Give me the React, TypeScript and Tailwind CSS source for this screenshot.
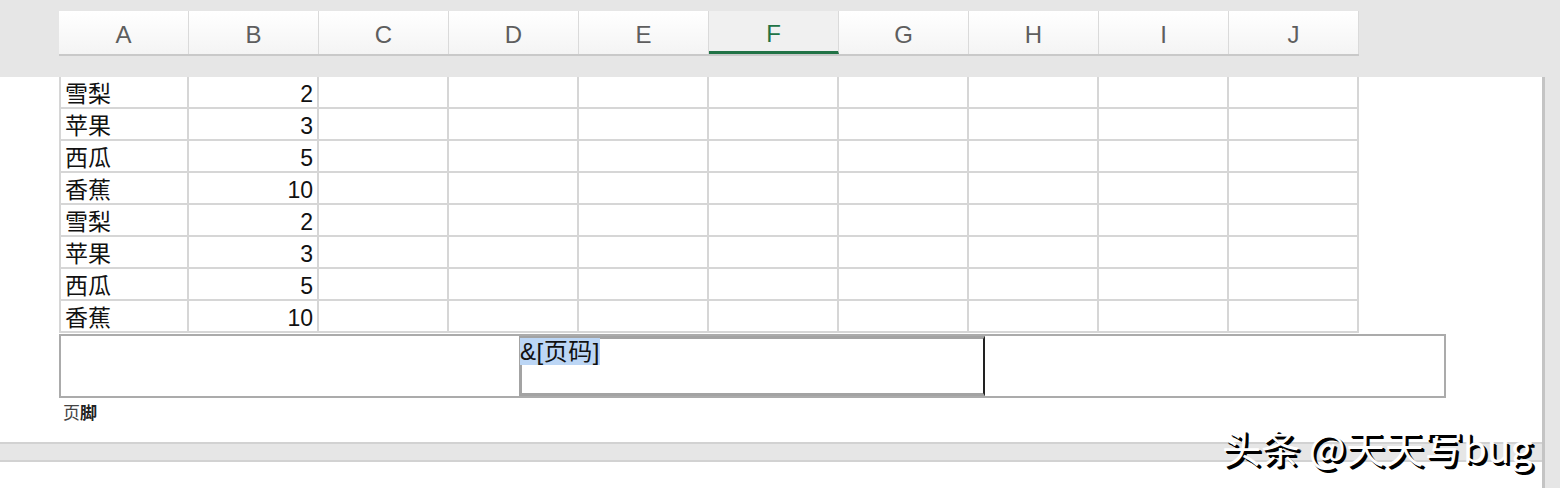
const COLS = ['A', 'B', 'C', 'D', 'E', 'F', 'G', 'H', 'I', 'J'];

const ROWS: [string, number][] = [
  ['雪梨', 2],
  ['苹果', 3],
  ['西瓜', 5],
  ['香蕉', 10],
  ['雪梨', 2],
  ['苹果', 3],
  ['西瓜', 5],
  ['香蕉', 10],
];

const FONT = "[font-family:'Liberation_Sans','Noto_Sans_CJK_SC',sans-serif]";

function HeaderRow() {
  return (
    <div className="ml-[59px] flex h-[45px] w-[1300px] border-b-2 border-[#c9c9c9] bg-gradient-to-b from-white to-[#f4f4f4]">
      {COLS.map((c) => {
        const active = c === 'F';
        return (
          <div
            key={c}
            className={`flex w-[130px] items-center justify-center border-r border-[#dadada] pt-[5px] text-[24px] ${
              active
                ? 'border-b-[3px] border-b-[#217346] bg-[#f0f0f0] text-[#217346]'
                : 'text-[#5e5e5e]'
            }`}
          >
            {c}
          </div>
        );
      })}
    </div>
  );
}

function DataGrid() {
  return (
    <div className="ml-[59px] w-[1300px] border-l-2 border-[#d6d6d6]">
      {ROWS.map(([name, qty], r) => (
        <div key={r} className="flex h-[32px] border-b-2 border-[#d6d6d6]">
          {COLS.map((c, i) => (
            <div
              key={c}
              className={`flex shrink-0 items-center border-r-2 border-[#d6d6d6] pt-[5px] text-[23px] leading-none text-[#111] ${
                i === 0 ? 'w-[128px] pl-[4px]' : 'w-[130px]'
              } ${i === 1 ? 'justify-end pr-[4px]' : ''}`}
            >
              {i === 0 ? name : i === 1 ? qty : null}
            </div>
          ))}
        </div>
      ))}
    </div>
  );
}

function FooterBox() {
  return (
    <div className="ml-[59px] mt-[1px] flex h-[64px] w-[1387px] border-2 border-[#ababab]">
      <div className="w-[458px]" />
      <div className="w-[466px] border-y-[3px] border-l-[3px] border-r-2 border-y-[#a3a3a3] border-l-[#a3a3a3] border-r-[#222]">
        <span className="-ml-[2px] bg-[#bcd6f5] text-[24px] leading-[25px] tracking-[0.5px] text-[#111]">&amp;[页码]</span>
      </div>
      <div className="flex-1" />
    </div>
  );
}

export default function App() {
  return (
    <div className={`relative h-[488px] w-[1560px] overflow-hidden bg-[#e6e6e6] ${FONT}`}>
      <div className="h-[77px] pt-[11px]">
        <HeaderRow />
      </div>
      <div className="flex">
        <div className="w-[1545px] border-r-[3px] border-[#c4c4c4]">
          <div className="h-[365px] bg-white">
            <DataGrid />
            <FooterBox />
            <div className="ml-[63px] mt-[3px] text-[17px] text-[#444]">
              页<span className="font-bold text-[#222]">脚</span>
            </div>
          </div>
          <div className="h-[20px] border-y-2 border-[#d2d2d2] bg-[#e6e6e6]" />
          <div className="h-[26px] bg-white" />
        </div>
        <div className="flex-1" />
      </div>
      <div className="absolute left-[1222px] top-[427px] whitespace-nowrap text-[39px] leading-none text-white [font-family:'Noto_Sans_CJK_SC',sans-serif] [text-shadow:2px_2px_0_#000,3px_3px_0_#000]">
        头条 @天天写bug
      </div>
    </div>
  );
}
